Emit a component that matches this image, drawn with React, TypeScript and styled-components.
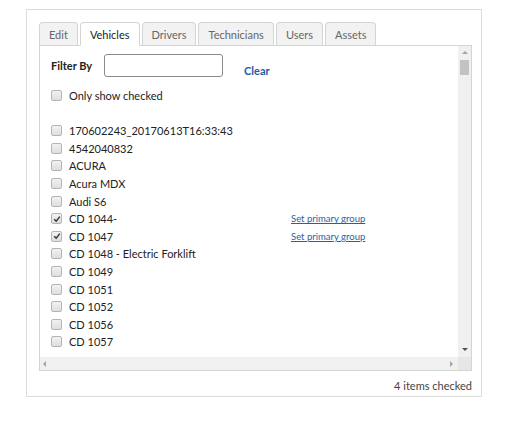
import React from "react";
import styled, { createGlobalStyle } from "styled-components";

const GlobalStyle = createGlobalStyle`
	html, body {
		margin: 0;
		padding: 0;
		background: #ffffff;
		font-family: Lato, "Open Sans", sans-serif;
	}
`;

const Page = styled.div`
	padding: 9px 0 0 26px;
`;

const Card = styled.div`
	box-sizing: border-box;
	width: 456px;
	height: 388px;
	border: 1px solid #dcdcdc;
	background: #fff;
	padding: 11px 9px 0 12px;
	display: flex;
	flex-direction: column;
`;

const TabBar = styled.div`
	display: flex;
	gap: 2px;
	height: 24px;
	align-items: flex-end;
`;

const Tab = styled.div<{ $active?: boolean }>`
	height: ${(p) => (p.$active ? "24px" : "23px")};
	box-sizing: border-box;
	padding: 0 9px;
	display: flex;
	align-items: center;
	font-size: 11px;
	color: ${(p) => (p.$active ? "#222" : "#666")};
	background: ${(p) => (p.$active ? "#fff" : "#f2f2f2")};
	border: 1px solid #d4d4d4;
	border-bottom: ${(p) => (p.$active ? "1px solid #fff" : "none")};
	border-radius: 4px 4px 0 0;
	margin-bottom: ${(p) => (p.$active ? "-1px" : "0")};
	position: relative;
	z-index: ${(p) => (p.$active ? 1 : 0)};
`;

const Panel = styled.div`
	height: 324px;
	border: 1px solid #d4d4d4;
	display: grid;
	grid-template-columns: 1fr 13px;
	grid-template-rows: 1fr 13px;
	background: #fff;
`;

const Content = styled.div`
	overflow: hidden;
	padding: 8px 0 0 11px;
`;

const FilterRow = styled.div`
	display: flex;
	align-items: center;
	height: 23px;
`;

const FilterLabel = styled.span`
	font-weight: 700;
	font-size: 11px;
	color: #222;
	width: 53px;
`;

const FilterInput = styled.input`
	width: 119px;
	height: 23px;
	box-sizing: border-box;
	border: 1px solid #8a8a8a;
	border-radius: 3px;
	padding: 2px 4px;
	margin: 0;
`;

const ClearLink = styled.span`
	margin-left: 21px;
	margin-top: 9px;
	font-weight: 700;
	font-size: 11px;
	color: #1a5ea8;
`;

const OnlyRow = styled.label`
	display: flex;
	align-items: center;
	gap: 7px;
	margin-top: 9px;
	margin-bottom: 18px;
	height: 18px;
	font-size: 11px;
	color: #222;
`;

const List = styled.div`
	display: flex;
	flex-direction: column;
`;

const Row = styled.div`
	display: flex;
	align-items: center;
	height: 17.6px;
	font-size: 11px;
	color: #222;
	white-space: nowrap;
`;

const Name = styled.span`
	margin-left: 7px;
	width: 222px;
`;

const GroupLink = styled.span`
	font-size: 9.5px;
	color: #2c5f9e;
	text-decoration: underline;
`;

const Box = styled.span`
	width: 9px;
	height: 9px;
	border: 1px solid #b5b5b5;
	border-radius: 2px;
	background: linear-gradient(#f2f2f2, #dedede);
	display: inline-flex;
	align-items: center;
	justify-content: center;
	flex: none;
`;

const VTrack = styled.div`
	background: #f0f0f0;
	display: flex;
	flex-direction: column;
	align-items: center;
	padding-top: 5px;
	padding-bottom: 6px;
`;

const Thumb = styled.div`
	width: 9px;
	height: 15px;
	background: #c3c3c3;
	margin-top: 6px;
`;

const Spacer = styled.div`
	flex: 1;
`;

const HTrack = styled.div`
	background: #f0f0f0;
	display: flex;
	align-items: center;
	padding: 0 5px 0 3px;
`;

const Corner = styled.div`
	background: #e6e6e6;
`;

const Arrow = styled.span<{ $dir: "up" | "down" | "left" | "right" }>`
	width: 0;
	height: 0;
	border: 3px solid transparent;
	${(p) =>
		p.$dir === "up"
			? "border-bottom-color: #a3a3a3; border-top-width: 0;"
			: p.$dir === "down"
			? "border-top-color: #505050; border-bottom-width: 0;"
			: p.$dir === "left"
			? "border-right-color: #a3a3a3; border-left-width: 0;"
			: "border-left-color: #a3a3a3; border-right-width: 0;"}
`;

const Footer = styled.div`
	text-align: right;
	font-size: 11px;
	color: #444;
	padding-top: 8px;
`;

const Check = () => (
	<svg width="8" height="8" viewBox="0 0 8 8">
		<path d="M1.2 4.2 L3.2 6.2 L6.8 1.6" fill="none" stroke="#333" strokeWidth="1.4" />
	</svg>
);

const vehicles: { name: string; checked?: boolean }[] = [
	{ name: "170602243_20170613T16:33:43" },
	{ name: "4542040832" },
	{ name: "ACURA" },
	{ name: "Acura MDX" },
	{ name: "Audi S6" },
	{ name: "CD 1044-", checked: true },
	{ name: "CD 1047", checked: true },
	{ name: "CD 1048 - Electric Forklift" },
	{ name: "CD 1049" },
	{ name: "CD 1051" },
	{ name: "CD 1052" },
	{ name: "CD 1056" },
	{ name: "CD 1057" },
];

const tabs = ["Edit", "Vehicles", "Drivers", "Technicians", "Users", "Assets"];

export default function App() {
	return (
		<Page>
			<GlobalStyle />
			<Card>
				<TabBar>
					{tabs.map((t) => (
						<Tab key={t} $active={t === "Vehicles"}>
							{t}
						</Tab>
					))}
				</TabBar>
				<Panel>
					<Content>
						<FilterRow>
							<FilterLabel>Filter By</FilterLabel>
							<FilterInput type="text" />
							<ClearLink>Clear</ClearLink>
						</FilterRow>
						<OnlyRow>
							<Box />
							Only show checked
						</OnlyRow>
						<List>
							{vehicles.map((v) => (
								<Row key={v.name}>
									<Box>{v.checked && <Check />}</Box>
									<Name>{v.name}</Name>
									{v.checked && <GroupLink>Set primary group</GroupLink>}
								</Row>
							))}
						</List>
					</Content>
					<VTrack>
						<Arrow $dir="up" />
						<Thumb />
						<Spacer />
						<Arrow $dir="down" />
					</VTrack>
					<HTrack>
						<Arrow $dir="left" />
						<Spacer />
						<Arrow $dir="right" />
					</HTrack>
					<Corner />
				</Panel>
				<Footer>4 items checked</Footer>
			</Card>
		</Page>
	);
}
